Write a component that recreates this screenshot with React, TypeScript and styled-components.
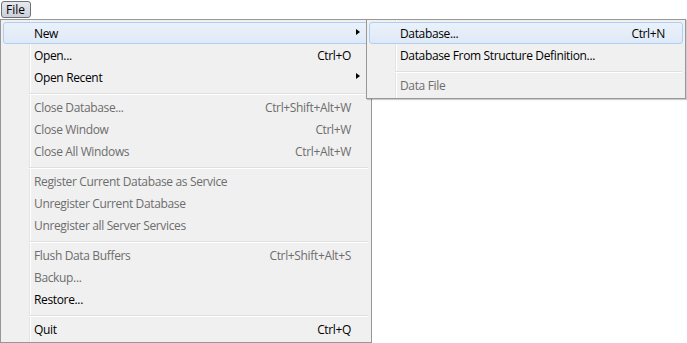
import styled, { createGlobalStyle } from "styled-components";

const GlobalStyle = createGlobalStyle`
    html, body {
        margin: 0;
        padding: 0;
        background: #ffffff;
    }
    body {
        font-family: "Open Sans", "Noto Sans", sans-serif;
        font-size: 12px;
        letter-spacing: -0.35px;
        color: #000000;
    }
`;

type Entry =
    | { kind: "item"; label: string; shortcut?: string; disabled?: boolean; submenu?: boolean; active?: boolean }
    | { kind: "sep" };

const fileItems: Entry[] = [
    { kind: "item", label: "New", submenu: true, active: true },
    { kind: "item", label: "Open...", shortcut: "Ctrl+O" },
    { kind: "item", label: "Open Recent", submenu: true },
    { kind: "sep" },
    { kind: "item", label: "Close Database...", shortcut: "Ctrl+Shift+Alt+W", disabled: true },
    { kind: "item", label: "Close Window", shortcut: "Ctrl+W", disabled: true },
    { kind: "item", label: "Close All Windows", shortcut: "Ctrl+Alt+W", disabled: true },
    { kind: "sep" },
    { kind: "item", label: "Register Current Database as Service", disabled: true },
    { kind: "item", label: "Unregister Current Database", disabled: true },
    { kind: "item", label: "Unregister all Server Services", disabled: true },
    { kind: "sep" },
    { kind: "item", label: "Flush Data Buffers", shortcut: "Ctrl+Shift+Alt+S", disabled: true },
    { kind: "item", label: "Backup...", disabled: true },
    { kind: "item", label: "Restore..." },
    { kind: "sep" },
    { kind: "item", label: "Quit", shortcut: "Ctrl+Q" },
];

const newItems: Entry[] = [
    { kind: "item", label: "Database...", shortcut: "Ctrl+N", active: true },
    { kind: "item", label: "Database From Structure Definition..." },
    { kind: "sep" },
    { kind: "item", label: "Data File", disabled: true },
];

const Page = styled.div`
    display: flex;
    flex-direction: column;
    align-items: flex-start;
    padding-top: 1px;
`;

const MenuBar = styled.div`
    display: flex;
    height: 17px;
    padding-left: 1px;
    margin-bottom: 1px;
`;

const FileButton = styled.div`
    display: flex;
    align-items: center;
    height: 15px;
    padding: 0 5px 0 4px;
    border: 1px solid #6c7179;
    border-radius: 3px;
    background: linear-gradient(#e6e9ee, #cbd0d9);
    line-height: 15px;
    letter-spacing: 0;
`;

const MenuArea = styled.div`
    position: relative;
`;

const Menu = styled.div<{ $width: number }>`
    display: flex;
    flex-direction: column;
    width: ${(p) => p.$width}px;
    box-sizing: border-box;
    padding: 2px;
    border: 1px solid #979797;
    background-color: #f0f0f0;
    background-image: linear-gradient(
        to right,
        transparent 28px,
        #e2e3e3 28px,
        #e2e3e3 29px,
        #ffffff 29px,
        #ffffff 30px,
        transparent 30px
    );
    background-origin: padding-box;
`;

const SubMenu = styled(Menu)`
    position: absolute;
    left: 366px;
    top: 0;
    box-shadow: 1px 1px 1px rgba(0, 0, 0, 0.2);
`;

const Item = styled.div<{ $active?: boolean; $disabled?: boolean }>`
    display: flex;
    align-items: center;
    height: 22px;
    box-sizing: border-box;
    padding: 0 17px 0 30px;
    border: 1px solid ${(p) => (p.$active ? "#aecff4" : "transparent")};
    border-radius: 3px;
    background: ${(p) => (p.$active ? "linear-gradient(#eaf1fa, #dfe9f6)" : "transparent")};
    color: ${(p) => (p.$disabled ? "#6d6d6d" : "#000000")};
    white-space: nowrap;
`;

const Label = styled.span`
    flex: 1;
`;

const Shortcut = styled.span`
    text-align: right;
`;

const Arrow = styled.span`
    position: absolute;
    right: 9px;
    top: 7px;
    width: 0;
    height: 0;
    border-top: 3.5px solid transparent;
    border-bottom: 3.5px solid transparent;
    border-left: 4px solid #000000;
`;

const ItemWrap = styled.div`
    position: relative;
`;

const Separator = styled.div`
    height: 8px;
    margin: 0 1px 0 26px;
    box-sizing: border-box;
    padding-top: 5px;

    &::before {
        content: "";
        display: block;
        height: 1px;
        background: #e0e0e0;
        border-bottom: 1px solid #ffffff;
    }
`;

const renderEntries = (entries: Entry[]) =>
    entries.map((e, i) =>
        e.kind === "sep" ? (
            <Separator key={i} />
        ) : (
            <ItemWrap key={i}>
                <Item $active={e.active} $disabled={e.disabled}>
                    <Label>{e.label}</Label>
                    {e.shortcut && <Shortcut>{e.shortcut}</Shortcut>}
                </Item>
                {e.submenu && <Arrow />}
            </ItemWrap>
        )
    );

export default function App() {
    return (
        <Page>
            <GlobalStyle />
            <MenuBar>
                <FileButton>File</FileButton>
            </MenuBar>
            <MenuArea>
                <Menu $width={372}>{renderEntries(fileItems)}</Menu>
                <SubMenu $width={320}>{renderEntries(newItems)}</SubMenu>
            </MenuArea>
        </Page>
    );
}
